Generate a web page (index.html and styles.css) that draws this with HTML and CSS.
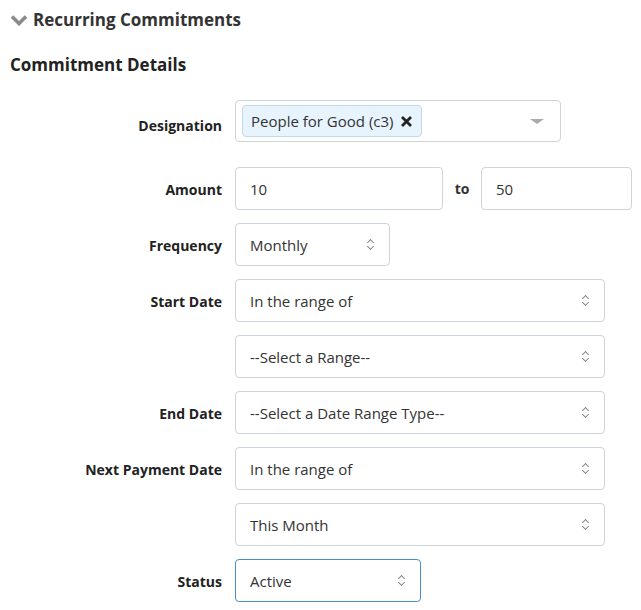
FILE: index.html
```html
<!DOCTYPE html>
<html>
<head>
<meta charset="utf-8">
<link rel="stylesheet" href="styles.css">
</head>
<body>
<div class="panel">
  <h2 class="section-title">
    <svg class="chev" width="18" height="12" viewBox="0 0 18 12"><path d="M2 2.5 L9 9.5 L16 2.5" fill="none" stroke="#8a8a8a" stroke-width="3.6"/></svg>
    Recurring Commitments
  </h2>
  <h3 class="sub-title">Commitment Details</h3>
  <div class="form">
    <div class="label label-desig">Designation</div>
    <div class="field">
      <div class="multi">
        <span class="tag">People for Good (c3)
          <svg class="x" width="13" height="13" viewBox="0 0 13 13"><path d="M2 2 L11 11 M11 2 L2 11" stroke="#222" stroke-width="2.8"/></svg>
        </span>
        <span class="caret"></span>
      </div>
    </div>

    <div class="label">Amount</div>
    <div class="field amount">
      <div class="input w-a1">10</div>
      <span class="to">to</span>
      <div class="input w-a2">50</div>
    </div>

    <div class="label">Frequency</div>
    <div class="field"><div class="select w-freq">Monthly<span class="updown"></span></div></div>

    <div class="label">Start Date</div>
    <div class="field"><div class="select w-full">In the range of<span class="updown"></span></div></div>
    <div class="label"></div>
    <div class="field"><div class="select w-full">--Select a Range--<span class="updown"></span></div></div>

    <div class="label">End Date</div>
    <div class="field"><div class="select w-full">--Select a Date Range Type--<span class="updown"></span></div></div>

    <div class="label">Next Payment Date</div>
    <div class="field"><div class="select w-full">In the range of<span class="updown"></span></div></div>
    <div class="label"></div>
    <div class="field"><div class="select w-full">This Month<span class="updown"></span></div></div>

    <div class="label">Status</div>
    <div class="field"><div class="select w-status focus">Active<span class="updown"></span></div></div>
  </div>
</div>
</body>
</html>
```
FILE: styles.css
```css
html, body { margin: 0; padding: 0; background: #fff; }
body { font-family: "Segoe UI", "Open Sans", "Noto Sans", sans-serif; color: #212529; }
.panel { padding: 6px 0 0 10px; }
.section-title { margin: 0; font-size: 17px; font-weight: 700; color: #333; display: flex; align-items: center; gap: 5px; height: 26px; }
.chev { display: block; margin-top: 1px; }
.sub-title { margin: 22px 0 0 0; font-size: 17px; font-weight: 700; color: #222; height: 22px; line-height: 22px; }
.form { display: grid; grid-template-columns: 212px auto; column-gap: 13px; row-gap: 13px; margin-top: 24px; align-items: center; }
.label { text-align: right; font-weight: 700; font-size: 14px; line-height: 20px; color: #222; padding-top: 2px; }
.label-desig { align-self: start; padding-top: 16px; }
.field { display: flex; align-items: center; }
.input, .select, .multi { box-sizing: border-box; height: 43px; border: 1px solid #ced4da; border-radius: 4px; padding: 0 14px; display: flex; align-items: center; font-size: 15px; color: #333; background: #fff; position: relative; }
.multi { width: 326px; height: 42px; padding: 0 6px; margin-bottom: 12px; }
.tag { display: flex; align-items: center; gap: 6px; height: 32px; box-sizing: border-box; background: #e8f4fd; border: 1px solid #c6d8e6; border-radius: 4px; padding: 0 8px 0 8px; font-size: 15px; color: #333; }
.x { display: block; }
.caret { position: absolute; right: 16px; top: 18px; width: 0; height: 0; border-left: 7px solid transparent; border-right: 7px solid transparent; border-top: 5px solid #aaa; }
.w-a1 { width: 208px; }
.w-a2 { width: 151px; }
.to { width: 38px; text-align: center; font-weight: 700; font-size: 14px; color: #333; }
.w-freq { width: 155px; }
.w-full { width: 370px; }
.w-status { width: 186px; }
.focus { border-color: #4a8fc7; }
.updown { position: absolute; right: 14px; top: 15px; width: 8px; height: 12px; }
.updown::before, .updown::after { content: ""; position: absolute; left: 1px; width: 4px; height: 4px; border-left: 1px solid #888; border-top: 1px solid #888; }
.updown::before { top: 1px; transform: rotate(45deg); }
.updown::after { top: 5px; transform: rotate(225deg); }
```
